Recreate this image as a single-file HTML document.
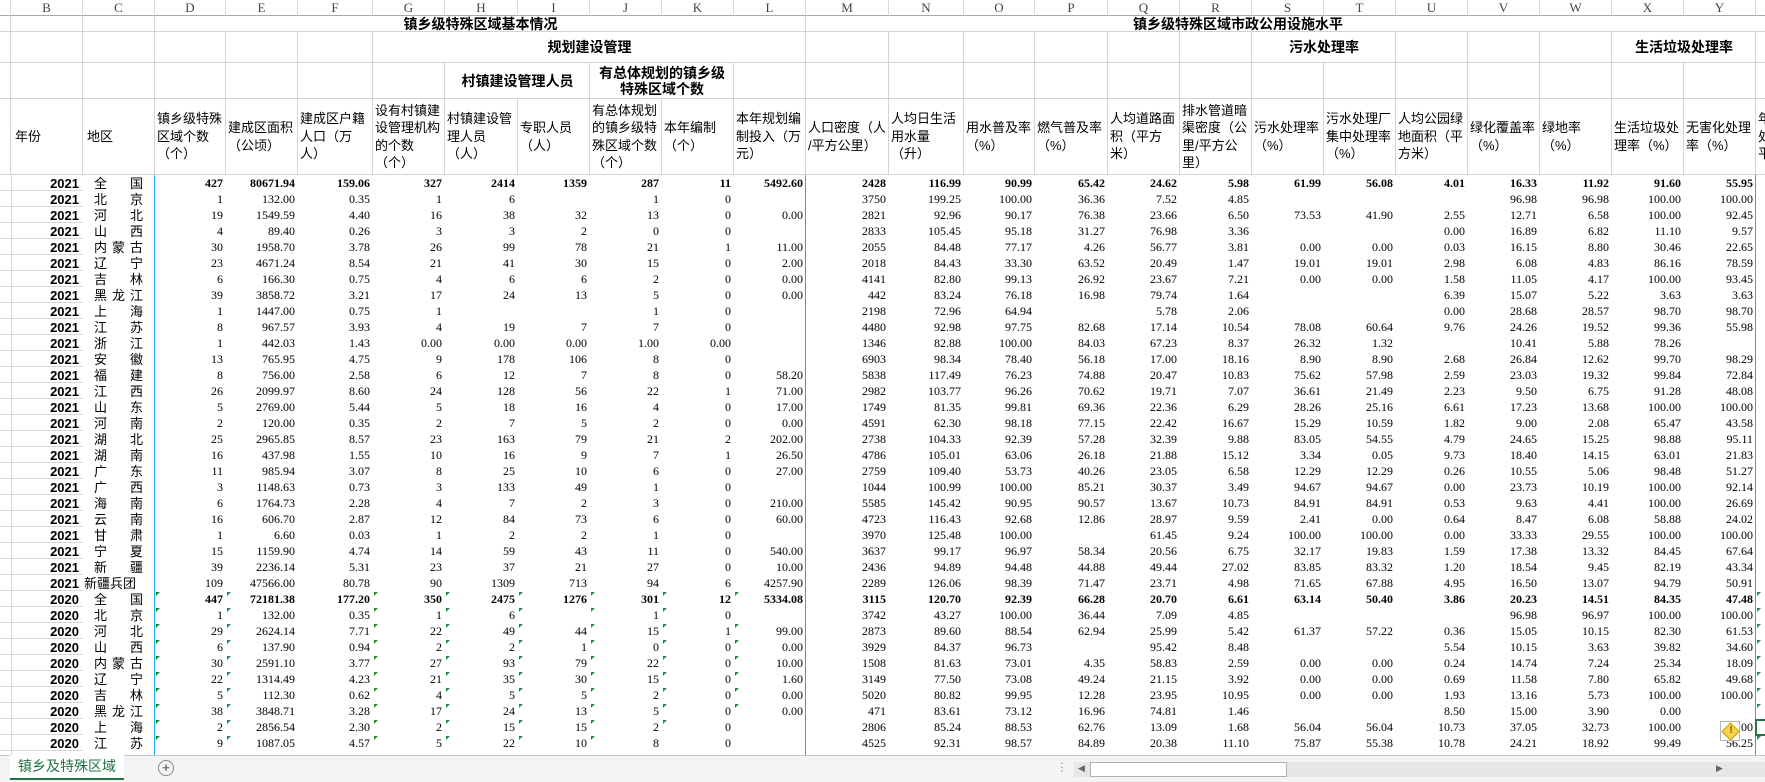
<!DOCTYPE html>
<html><head><meta charset="utf-8">
<style>
*{margin:0;padding:0}
body{width:1765px;height:782px;position:relative;overflow:hidden;background:#fff;font-family:"Liberation Sans","Noto Sans CJK SC",sans-serif}
.L{position:absolute;top:0;height:16px;box-sizing:border-box;border-right:1px solid #d8d8d8;border-bottom:1px solid #a8a8a8;font:13px/15px "Liberation Serif",serif;color:#444;text-align:center;background:#fff}
.h{position:absolute;box-sizing:border-box;border-right:1px solid #d4d4d4;border-bottom:1px solid #d4d4d4;font:13px/17.5px "Liberation Sans","Noto Sans CJK SC",sans-serif;display:flex;align-items:center;padding:0 1px 0 2px;color:#000;white-space:nowrap;overflow:hidden}
.hb{font-weight:bold;font-size:14px;justify-content:center;text-align:center;line-height:18px}
.d{position:absolute;left:11px;top:0;width:1754px;height:757px;font:12px "Liberation Serif",serif;color:#000}
.r{position:absolute;left:0;display:grid;grid-template-columns:72px 72px 71px 72px 75px 72px 73px 72px 72px 72px 72px 83px 75px 71px 73px 72px 72px 72px 72px 72px 72px 72px 72px 72px;grid-template-rows:16px;height:16px}
.d i{font-style:normal;text-align:right;padding-right:3px;line-height:17px;height:16px;white-space:nowrap;position:relative}
.b i{font-weight:bold}
.d i.y{font:bold 13px/17px "Liberation Sans",sans-serif;padding-right:4px}
.d i.c{text-align:justify;text-align-last:justify;padding:0 12px 0 11px;font:13px/17px "Liberation Sans","Noto Sans CJK SC",sans-serif;font-weight:normal}
.d i.t::before{content:"";position:absolute;left:1px;top:1px;border-style:solid;border-width:4px 4px 0 0;border-color:#1e8f3a transparent transparent transparent}
.strip{position:absolute;left:0;top:175px;width:83px;height:582px;background:repeating-linear-gradient(to bottom,transparent 0,transparent 15px,#dadada 15px,#dadada 16px)}
.sv{position:absolute;left:11px;top:175px;width:1px;height:582px;background:#dadada}
.bl{position:absolute;top:175px;height:582px;width:1px;background:#27a9e1}
.zt{position:absolute;left:1757px;width:0;height:0;border-style:solid;border-width:4px 4px 0 0;border-color:#1e8f3a transparent transparent transparent}
</style></head><body>

<div class="L" style="left:0;width:11px"></div>
<div class="L" style="left:11px;width:72px">B</div>
<div class="L" style="left:83px;width:72px">C</div>
<div class="L" style="left:155px;width:71px">D</div>
<div class="L" style="left:226px;width:72px">E</div>
<div class="L" style="left:298px;width:75px">F</div>
<div class="L" style="left:373px;width:72px">G</div>
<div class="L" style="left:445px;width:73px">H</div>
<div class="L" style="left:518px;width:72px">I</div>
<div class="L" style="left:590px;width:72px">J</div>
<div class="L" style="left:662px;width:72px">K</div>
<div class="L" style="left:734px;width:72px">L</div>
<div class="L" style="left:806px;width:83px">M</div>
<div class="L" style="left:889px;width:75px">N</div>
<div class="L" style="left:964px;width:71px">O</div>
<div class="L" style="left:1035px;width:73px">P</div>
<div class="L" style="left:1108px;width:72px">Q</div>
<div class="L" style="left:1180px;width:72px">R</div>
<div class="L" style="left:1252px;width:72px">S</div>
<div class="L" style="left:1324px;width:72px">T</div>
<div class="L" style="left:1396px;width:72px">U</div>
<div class="L" style="left:1468px;width:72px">V</div>
<div class="L" style="left:1540px;width:72px">W</div>
<div class="L" style="left:1612px;width:72px">X</div>
<div class="L" style="left:1684px;width:72px">Y</div>
<div class="L" style="left:1756px;width:20px"></div>

<div class="h" style="left:0;top:16px;width:11px;height:16px"></div>
<div class="h" style="left:11px;top:16px;width:72px;height:16px"></div>
<div class="h" style="left:83px;top:16px;width:72px;height:16px"></div>
<div class="h hb" style="left:155px;top:16px;width:651px;height:16px">镇乡级特殊区域基本情况</div>
<div class="h hb" style="left:806px;top:16px;width:964px;height:16px;justify-content:flex-start;padding-left:327px">镇乡级特殊区域市政公用设施水平</div>

<div class="h" style="left:0;top:32px;width:11px;height:31px"></div>
<div class="h" style="left:11px;top:32px;width:72px;height:31px"></div>
<div class="h" style="left:83px;top:32px;width:72px;height:31px"></div>
<div class="h" style="left:155px;top:32px;width:71px;height:31px"></div>
<div class="h" style="left:226px;top:32px;width:72px;height:31px"></div>
<div class="h" style="left:298px;top:32px;width:75px;height:31px"></div>
<div class="h hb" style="left:373px;top:32px;width:433px;height:31px">规划建设管理</div>
<div class="h" style="left:806px;top:32px;width:83px;height:31px"></div>
<div class="h" style="left:889px;top:32px;width:75px;height:31px"></div>
<div class="h" style="left:964px;top:32px;width:71px;height:31px"></div>
<div class="h" style="left:1035px;top:32px;width:73px;height:31px"></div>
<div class="h" style="left:1108px;top:32px;width:72px;height:31px"></div>
<div class="h" style="left:1180px;top:32px;width:72px;height:31px"></div>
<div class="h hb" style="left:1252px;top:32px;width:144px;height:31px">污水处理率</div>
<div class="h" style="left:1396px;top:32px;width:72px;height:31px"></div>
<div class="h" style="left:1468px;top:32px;width:72px;height:31px"></div>
<div class="h" style="left:1540px;top:32px;width:72px;height:31px"></div>
<div class="h hb" style="left:1612px;top:32px;width:144px;height:31px">生活垃圾处理率</div>
<div class="h" style="left:1756px;top:32px;width:20px;height:31px"></div>

<div class="h" style="left:0;top:63px;width:11px;height:36px"></div>
<div class="h" style="left:11px;top:63px;width:72px;height:36px"></div>
<div class="h" style="left:83px;top:63px;width:72px;height:36px"></div>
<div class="h" style="left:155px;top:63px;width:71px;height:36px"></div>
<div class="h" style="left:226px;top:63px;width:72px;height:36px"></div>
<div class="h" style="left:298px;top:63px;width:75px;height:36px"></div>
<div class="h" style="left:373px;top:63px;width:72px;height:36px"></div>
<div class="h hb" style="left:445px;top:63px;width:145px;height:36px">村镇建设管理人员</div>
<div class="h hb" style="left:590px;top:63px;width:144px;height:36px;line-height:16px">有总体规划的镇乡级<br>特殊区域个数</div>
<div class="h" style="left:734px;top:63px;width:72px;height:36px"></div>
<div class="h" style="left:806px;top:63px;width:83px;height:36px"></div>
<div class="h" style="left:889px;top:63px;width:75px;height:36px"></div>
<div class="h" style="left:964px;top:63px;width:71px;height:36px"></div>
<div class="h" style="left:1035px;top:63px;width:73px;height:36px"></div>
<div class="h" style="left:1108px;top:63px;width:72px;height:36px"></div>
<div class="h" style="left:1180px;top:63px;width:72px;height:36px"></div>
<div class="h" style="left:1252px;top:63px;width:72px;height:36px"></div>
<div class="h" style="left:1324px;top:63px;width:72px;height:36px"></div>
<div class="h" style="left:1396px;top:63px;width:72px;height:36px"></div>
<div class="h" style="left:1468px;top:63px;width:72px;height:36px"></div>
<div class="h" style="left:1540px;top:63px;width:72px;height:36px"></div>
<div class="h" style="left:1612px;top:63px;width:72px;height:36px"></div>
<div class="h" style="left:1684px;top:63px;width:72px;height:36px"></div>
<div class="h" style="left:1756px;top:63px;width:20px;height:36px"></div>

<div class="h" style="left:0;top:99px;width:11px;height:76px"></div>
<div class="h" style="left:11px;top:99px;width:72px;height:76px;padding-left:4px">年份</div>
<div class="h" style="left:83px;top:99px;width:72px;height:76px;padding-left:4px">地区</div>
<div class="h" style="left:155px;top:99px;width:71px;height:76px">镇乡级特殊<br>区域个数<br>（个）</div>
<div class="h" style="left:226px;top:99px;width:72px;height:76px">建成区面积<br>（公顷）</div>
<div class="h" style="left:298px;top:99px;width:75px;height:76px">建成区户籍<br>人口（万<br>人）</div>
<div class="h" style="left:373px;top:99px;width:72px;height:76px">设有村镇建<br>设管理机构<br>的个数<br>（个）</div>
<div class="h" style="left:445px;top:99px;width:73px;height:76px">村镇建设管<br>理人员<br>（人）</div>
<div class="h" style="left:518px;top:99px;width:72px;height:76px">专职人员<br>（人）</div>
<div class="h" style="left:590px;top:99px;width:72px;height:76px">有总体规划<br>的镇乡级特<br>殊区域个数<br>（个）</div>
<div class="h" style="left:662px;top:99px;width:72px;height:76px">本年编制<br>（个）</div>
<div class="h" style="left:734px;top:99px;width:72px;height:76px">本年规划编<br>制投入（万<br>元）</div>
<div class="h" style="left:806px;top:99px;width:83px;height:76px">人口密度（人<br>/平方公里）</div>
<div class="h" style="left:889px;top:99px;width:75px;height:76px">人均日生活<br>用水量<br>（升）</div>
<div class="h" style="left:964px;top:99px;width:71px;height:76px">用水普及率<br>（%）</div>
<div class="h" style="left:1035px;top:99px;width:73px;height:76px">燃气普及率<br>（%）</div>
<div class="h" style="left:1108px;top:99px;width:72px;height:76px">人均道路面<br>积（平方<br>米）</div>
<div class="h" style="left:1180px;top:99px;width:72px;height:76px">排水管道暗<br>渠密度（公<br>里/平方公<br>里）</div>
<div class="h" style="left:1252px;top:99px;width:72px;height:76px">污水处理率<br>（%）</div>
<div class="h" style="left:1324px;top:99px;width:72px;height:76px">污水处理厂<br>集中处理率<br>（%）</div>
<div class="h" style="left:1396px;top:99px;width:72px;height:76px">人均公园绿<br>地面积（平<br>方米）</div>
<div class="h" style="left:1468px;top:99px;width:72px;height:76px">绿化覆盖率<br>（%）</div>
<div class="h" style="left:1540px;top:99px;width:72px;height:76px">绿地率<br>（%）</div>
<div class="h" style="left:1612px;top:99px;width:72px;height:76px">生活垃圾处<br>理率（%）</div>
<div class="h" style="left:1684px;top:99px;width:72px;height:76px">无害化处理<br>率（%）</div>
<div class="h" style="left:1756px;top:99px;width:20px;height:76px">年<br>处<br>平</div>

<div class="strip"></div>
<div class="sv"></div>

<div class="d">
<div class="r b" style="top:175px"><i class="y">2021</i><i class="c">全 国</i><i>427</i><i>80671.94</i><i>159.06</i><i>327</i><i>2414</i><i>1359</i><i>287</i><i>11</i><i>5492.60</i><i>2428</i><i>116.99</i><i>90.99</i><i>65.42</i><i>24.62</i><i>5.98</i><i>61.99</i><i>56.08</i><i>4.01</i><i>16.33</i><i>11.92</i><i>91.60</i><i>55.95</i></div>
<div class="r" style="top:191px"><i class="y">2021</i><i class="c">北 京</i><i>1</i><i>132.00</i><i>0.35</i><i>1</i><i>6</i><i></i><i>1</i><i>0</i><i></i><i>3750</i><i>199.25</i><i>100.00</i><i>36.36</i><i>7.52</i><i>4.85</i><i></i><i></i><i></i><i>96.98</i><i>96.98</i><i>100.00</i><i>100.00</i></div>
<div class="r" style="top:207px"><i class="y">2021</i><i class="c">河 北</i><i>19</i><i>1549.59</i><i>4.40</i><i>16</i><i>38</i><i>32</i><i>13</i><i>0</i><i>0.00</i><i>2821</i><i>92.96</i><i>90.17</i><i>76.38</i><i>23.66</i><i>6.50</i><i>73.53</i><i>41.90</i><i>2.55</i><i>12.71</i><i>6.58</i><i>100.00</i><i>92.45</i></div>
<div class="r" style="top:223px"><i class="y">2021</i><i class="c">山 西</i><i>4</i><i>89.40</i><i>0.26</i><i>3</i><i>3</i><i>2</i><i>0</i><i>0</i><i></i><i>2833</i><i>105.45</i><i>95.18</i><i>31.27</i><i>76.98</i><i>3.36</i><i></i><i></i><i>0.00</i><i>16.89</i><i>6.82</i><i>11.10</i><i>9.57</i></div>
<div class="r" style="top:239px"><i class="y">2021</i><i class="c">内 蒙 古</i><i>30</i><i>1958.70</i><i>3.78</i><i>26</i><i>99</i><i>78</i><i>21</i><i>1</i><i>11.00</i><i>2055</i><i>84.48</i><i>77.17</i><i>4.26</i><i>56.77</i><i>3.81</i><i>0.00</i><i>0.00</i><i>0.03</i><i>16.15</i><i>8.80</i><i>30.46</i><i>22.65</i></div>
<div class="r" style="top:255px"><i class="y">2021</i><i class="c">辽 宁</i><i>23</i><i>4671.24</i><i>8.54</i><i>21</i><i>41</i><i>30</i><i>15</i><i>0</i><i>2.00</i><i>2018</i><i>84.43</i><i>33.30</i><i>63.52</i><i>20.49</i><i>1.47</i><i>19.01</i><i>19.01</i><i>2.98</i><i>6.08</i><i>4.83</i><i>86.16</i><i>78.59</i></div>
<div class="r" style="top:271px"><i class="y">2021</i><i class="c">吉 林</i><i>6</i><i>166.30</i><i>0.75</i><i>4</i><i>6</i><i>6</i><i>2</i><i>0</i><i>0.00</i><i>4141</i><i>82.80</i><i>99.13</i><i>26.92</i><i>23.67</i><i>7.21</i><i>0.00</i><i>0.00</i><i>1.58</i><i>11.05</i><i>4.17</i><i>100.00</i><i>93.45</i></div>
<div class="r" style="top:287px"><i class="y">2021</i><i class="c">黑 龙 江</i><i>39</i><i>3858.72</i><i>3.21</i><i>17</i><i>24</i><i>13</i><i>5</i><i>0</i><i>0.00</i><i>442</i><i>83.24</i><i>76.18</i><i>16.98</i><i>79.74</i><i>1.64</i><i></i><i></i><i>6.39</i><i>15.07</i><i>5.22</i><i>3.63</i><i>3.63</i></div>
<div class="r" style="top:303px"><i class="y">2021</i><i class="c">上 海</i><i>1</i><i>1447.00</i><i>0.75</i><i>1</i><i></i><i></i><i>1</i><i>0</i><i></i><i>2198</i><i>72.96</i><i>64.94</i><i></i><i>5.78</i><i>2.06</i><i></i><i></i><i>0.00</i><i>28.68</i><i>28.57</i><i>98.70</i><i>98.70</i></div>
<div class="r" style="top:319px"><i class="y">2021</i><i class="c">江 苏</i><i>8</i><i>967.57</i><i>3.93</i><i>4</i><i>19</i><i>7</i><i>7</i><i>0</i><i></i><i>4480</i><i>92.98</i><i>97.75</i><i>82.68</i><i>17.14</i><i>10.54</i><i>78.08</i><i>60.64</i><i>9.76</i><i>24.26</i><i>19.52</i><i>99.36</i><i>55.98</i></div>
<div class="r" style="top:335px"><i class="y">2021</i><i class="c">浙 江</i><i>1</i><i>442.03</i><i>1.43</i><i>0.00</i><i>0.00</i><i>0.00</i><i>1.00</i><i>0.00</i><i></i><i>1346</i><i>82.88</i><i>100.00</i><i>84.03</i><i>67.23</i><i>8.37</i><i>26.32</i><i>1.32</i><i></i><i>10.41</i><i>5.88</i><i>78.26</i><i></i></div>
<div class="r" style="top:351px"><i class="y">2021</i><i class="c">安 徽</i><i>13</i><i>765.95</i><i>4.75</i><i>9</i><i>178</i><i>106</i><i>8</i><i>0</i><i></i><i>6903</i><i>98.34</i><i>78.40</i><i>56.18</i><i>17.00</i><i>18.16</i><i>8.90</i><i>8.90</i><i>2.68</i><i>26.84</i><i>12.62</i><i>99.70</i><i>98.29</i></div>
<div class="r" style="top:367px"><i class="y">2021</i><i class="c">福 建</i><i>8</i><i>756.00</i><i>2.58</i><i>6</i><i>12</i><i>7</i><i>8</i><i>0</i><i>58.20</i><i>5838</i><i>117.49</i><i>76.23</i><i>74.88</i><i>20.47</i><i>10.83</i><i>75.62</i><i>57.98</i><i>2.59</i><i>23.03</i><i>19.32</i><i>99.84</i><i>72.84</i></div>
<div class="r" style="top:383px"><i class="y">2021</i><i class="c">江 西</i><i>26</i><i>2099.97</i><i>8.60</i><i>24</i><i>128</i><i>56</i><i>22</i><i>1</i><i>71.00</i><i>2982</i><i>103.77</i><i>96.26</i><i>70.62</i><i>19.71</i><i>7.07</i><i>36.61</i><i>21.49</i><i>2.23</i><i>9.50</i><i>6.75</i><i>91.28</i><i>48.08</i></div>
<div class="r" style="top:399px"><i class="y">2021</i><i class="c">山 东</i><i>5</i><i>2769.00</i><i>5.44</i><i>5</i><i>18</i><i>16</i><i>4</i><i>0</i><i>17.00</i><i>1749</i><i>81.35</i><i>99.81</i><i>69.36</i><i>22.36</i><i>6.29</i><i>28.26</i><i>25.16</i><i>6.61</i><i>17.23</i><i>13.68</i><i>100.00</i><i>100.00</i></div>
<div class="r" style="top:415px"><i class="y">2021</i><i class="c">河 南</i><i>2</i><i>120.00</i><i>0.35</i><i>2</i><i>7</i><i>5</i><i>2</i><i>0</i><i>0.00</i><i>4591</i><i>62.30</i><i>98.18</i><i>77.15</i><i>22.42</i><i>16.67</i><i>15.29</i><i>10.59</i><i>1.82</i><i>9.00</i><i>2.08</i><i>65.47</i><i>43.58</i></div>
<div class="r" style="top:431px"><i class="y">2021</i><i class="c">湖 北</i><i>25</i><i>2965.85</i><i>8.57</i><i>23</i><i>163</i><i>79</i><i>21</i><i>2</i><i>202.00</i><i>2738</i><i>104.33</i><i>92.39</i><i>57.28</i><i>32.39</i><i>9.88</i><i>83.05</i><i>54.55</i><i>4.79</i><i>24.65</i><i>15.25</i><i>98.88</i><i>95.11</i></div>
<div class="r" style="top:447px"><i class="y">2021</i><i class="c">湖 南</i><i>16</i><i>437.98</i><i>1.55</i><i>10</i><i>16</i><i>9</i><i>7</i><i>1</i><i>26.50</i><i>4786</i><i>105.01</i><i>63.06</i><i>26.18</i><i>21.88</i><i>15.12</i><i>3.34</i><i>0.05</i><i>9.73</i><i>18.40</i><i>14.15</i><i>63.01</i><i>21.83</i></div>
<div class="r" style="top:463px"><i class="y">2021</i><i class="c">广 东</i><i>11</i><i>985.94</i><i>3.07</i><i>8</i><i>25</i><i>10</i><i>6</i><i>0</i><i>27.00</i><i>2759</i><i>109.40</i><i>53.73</i><i>40.26</i><i>23.05</i><i>6.58</i><i>12.29</i><i>12.29</i><i>0.26</i><i>10.55</i><i>5.06</i><i>98.48</i><i>51.27</i></div>
<div class="r" style="top:479px"><i class="y">2021</i><i class="c">广 西</i><i>3</i><i>1148.63</i><i>0.73</i><i>3</i><i>133</i><i>49</i><i>1</i><i>0</i><i></i><i>1044</i><i>100.99</i><i>100.00</i><i>85.21</i><i>30.37</i><i>3.49</i><i>94.67</i><i>94.67</i><i>0.00</i><i>23.73</i><i>10.19</i><i>100.00</i><i>92.14</i></div>
<div class="r" style="top:495px"><i class="y">2021</i><i class="c">海 南</i><i>6</i><i>1764.73</i><i>2.28</i><i>4</i><i>7</i><i>2</i><i>3</i><i>0</i><i>210.00</i><i>5585</i><i>145.42</i><i>90.95</i><i>90.57</i><i>13.67</i><i>10.73</i><i>84.91</i><i>84.91</i><i>0.53</i><i>9.63</i><i>4.41</i><i>100.00</i><i>26.69</i></div>
<div class="r" style="top:511px"><i class="y">2021</i><i class="c">云 南</i><i>16</i><i>606.70</i><i>2.87</i><i>12</i><i>84</i><i>73</i><i>6</i><i>0</i><i>60.00</i><i>4723</i><i>116.43</i><i>92.68</i><i>12.86</i><i>28.97</i><i>9.59</i><i>2.41</i><i>0.00</i><i>0.64</i><i>8.47</i><i>6.08</i><i>58.88</i><i>24.02</i></div>
<div class="r" style="top:527px"><i class="y">2021</i><i class="c">甘 肃</i><i>1</i><i>6.60</i><i>0.03</i><i>1</i><i>2</i><i>2</i><i>1</i><i>0</i><i></i><i>3970</i><i>125.48</i><i>100.00</i><i></i><i>61.45</i><i>9.24</i><i>100.00</i><i>100.00</i><i>0.00</i><i>33.33</i><i>29.55</i><i>100.00</i><i>100.00</i></div>
<div class="r" style="top:543px"><i class="y">2021</i><i class="c">宁 夏</i><i>15</i><i>1159.90</i><i>4.74</i><i>14</i><i>59</i><i>43</i><i>11</i><i>0</i><i>540.00</i><i>3637</i><i>99.17</i><i>96.97</i><i>58.34</i><i>20.56</i><i>6.75</i><i>32.17</i><i>19.83</i><i>1.59</i><i>17.38</i><i>13.32</i><i>84.45</i><i>67.64</i></div>
<div class="r" style="top:559px"><i class="y">2021</i><i class="c">新 疆</i><i>39</i><i>2236.14</i><i>5.31</i><i>23</i><i>37</i><i>21</i><i>27</i><i>0</i><i>10.00</i><i>2436</i><i>94.89</i><i>94.48</i><i>44.88</i><i>49.44</i><i>27.02</i><i>83.85</i><i>83.32</i><i>1.20</i><i>18.54</i><i>9.45</i><i>82.19</i><i>43.34</i></div>
<div class="r" style="top:575px"><i class="y">2021</i><i class="c" style="padding:0 2px 0 1px;text-align-last:left">新疆兵团</i><i>109</i><i>47566.00</i><i>80.78</i><i>90</i><i>1309</i><i>713</i><i>94</i><i>6</i><i>4257.90</i><i>2289</i><i>126.06</i><i>98.39</i><i>71.47</i><i>23.71</i><i>4.98</i><i>71.65</i><i>67.88</i><i>4.95</i><i>16.50</i><i>13.07</i><i>94.79</i><i>50.91</i></div>
<div class="r b" style="top:591px"><i class="y">2020</i><i class="c">全 国</i><i class="t">447</i><i class="t">72181.38</i><i>177.20</i><i class="t">350</i><i class="t">2475</i><i class="t">1276</i><i class="t">301</i><i class="t">12</i><i class="t">5334.08</i><i>3115</i><i>120.70</i><i>92.39</i><i>66.28</i><i>20.70</i><i>6.61</i><i>63.14</i><i>50.40</i><i>3.86</i><i>20.23</i><i>14.51</i><i>84.35</i><i>47.48</i></div>
<div class="r" style="top:607px"><i class="y">2020</i><i class="c">北 京</i><i class="t">1</i><i class="t">132.00</i><i>0.35</i><i class="t">1</i><i class="t">6</i><i class="t"></i><i class="t">1</i><i class="t">0</i><i></i><i>3742</i><i>43.27</i><i>100.00</i><i>36.44</i><i>7.09</i><i>4.85</i><i></i><i></i><i></i><i>96.98</i><i>96.97</i><i>100.00</i><i>100.00</i></div>
<div class="r" style="top:623px"><i class="y">2020</i><i class="c">河 北</i><i class="t">29</i><i class="t">2624.14</i><i>7.71</i><i class="t">22</i><i class="t">49</i><i class="t">44</i><i class="t">15</i><i class="t">1</i><i class="t">99.00</i><i>2873</i><i>89.60</i><i>88.54</i><i>62.94</i><i>25.99</i><i>5.42</i><i>61.37</i><i>57.22</i><i>0.36</i><i>15.05</i><i>10.15</i><i>82.30</i><i>61.53</i></div>
<div class="r" style="top:639px"><i class="y">2020</i><i class="c">山 西</i><i class="t">6</i><i class="t">137.90</i><i>0.94</i><i class="t">2</i><i class="t">2</i><i class="t">1</i><i class="t">0</i><i class="t">0</i><i class="t">0.00</i><i>3929</i><i>84.37</i><i>96.73</i><i></i><i>95.42</i><i>8.48</i><i></i><i></i><i>5.54</i><i>10.15</i><i>3.63</i><i>39.82</i><i>34.60</i></div>
<div class="r" style="top:655px"><i class="y">2020</i><i class="c">内 蒙 古</i><i class="t">30</i><i class="t">2591.10</i><i>3.77</i><i class="t">27</i><i class="t">93</i><i class="t">79</i><i class="t">22</i><i class="t">0</i><i class="t">10.00</i><i>1508</i><i>81.63</i><i>73.01</i><i>4.35</i><i>58.83</i><i>2.59</i><i>0.00</i><i>0.00</i><i>0.24</i><i>14.74</i><i>7.24</i><i>25.34</i><i>18.09</i></div>
<div class="r" style="top:671px"><i class="y">2020</i><i class="c">辽 宁</i><i class="t">22</i><i class="t">1314.49</i><i>4.23</i><i class="t">21</i><i class="t">35</i><i class="t">30</i><i class="t">15</i><i class="t">0</i><i class="t">1.60</i><i>3149</i><i>77.50</i><i>73.08</i><i>49.24</i><i>21.15</i><i>3.92</i><i>0.00</i><i>0.00</i><i>0.69</i><i>11.58</i><i>7.80</i><i>65.82</i><i>49.68</i></div>
<div class="r" style="top:687px"><i class="y">2020</i><i class="c">吉 林</i><i class="t">5</i><i class="t">112.30</i><i>0.62</i><i class="t">4</i><i class="t">5</i><i class="t">5</i><i class="t">2</i><i class="t">0</i><i class="t">0.00</i><i>5020</i><i>80.82</i><i>99.95</i><i>12.28</i><i>23.95</i><i>10.95</i><i>0.00</i><i>0.00</i><i>1.93</i><i>13.16</i><i>5.73</i><i>100.00</i><i>100.00</i></div>
<div class="r" style="top:703px"><i class="y">2020</i><i class="c">黑 龙 江</i><i class="t">38</i><i class="t">3848.71</i><i>3.28</i><i class="t">17</i><i class="t">24</i><i class="t">13</i><i class="t">5</i><i class="t">0</i><i class="t">0.00</i><i>471</i><i>83.61</i><i>73.12</i><i>16.96</i><i>74.81</i><i>1.46</i><i></i><i></i><i>8.50</i><i>15.00</i><i>3.90</i><i>0.00</i><i></i></div>
<div class="r" style="top:719px"><i class="y">2020</i><i class="c">上 海</i><i class="t">2</i><i class="t">2856.54</i><i>2.30</i><i class="t">2</i><i class="t">15</i><i class="t">15</i><i class="t">2</i><i class="t">0</i><i></i><i>2806</i><i>85.24</i><i>88.53</i><i>62.76</i><i>13.09</i><i>1.68</i><i>56.04</i><i>56.04</i><i>10.73</i><i>37.05</i><i>32.73</i><i>100.00</i><i>100.00</i></div>
<div class="r" style="top:735px"><i class="y">2020</i><i class="c">江 苏</i><i class="t">9</i><i class="t">1087.05</i><i>4.57</i><i class="t">5</i><i class="t">22</i><i class="t">10</i><i class="t">8</i><i>0</i><i></i><i>4525</i><i>92.31</i><i>98.57</i><i>84.89</i><i>20.38</i><i>11.10</i><i>75.87</i><i>55.38</i><i>10.78</i><i>24.21</i><i>18.92</i><i>99.49</i><i>56.25</i></div>
</div>

<div class="bl" style="left:154px"></div>
<div class="bl" style="left:805px"></div>
<div class="bl" style="left:1755px"></div>

<div class="zt" style="top:592px"></div><div class="zt" style="top:608px"></div><div class="zt" style="top:624px"></div><div class="zt" style="top:640px"></div><div class="zt" style="top:656px"></div><div class="zt" style="top:672px"></div><div class="zt" style="top:688px"></div><div class="zt" style="top:704px"></div><div class="zt" style="top:736px"></div>

<div style="position:absolute;left:1755px;top:719px;width:12px;height:17px;border:2px solid #217346;box-sizing:border-box;border-right:none"></div>
<div style="position:absolute;left:1720px;top:721px;width:20px;height:20px;border:1px solid #b5b5b5;background:#fff;box-sizing:border-box"></div>
<div style="position:absolute;left:1724px;top:725px;width:11px;height:11px;background:#f5d34a;border:1px solid #c9a100;transform:rotate(45deg)"></div>
<div style="position:absolute;left:1727px;top:724px;width:8px;font:bold 10px/14px 'Liberation Sans',sans-serif;color:#7a5a00;text-align:center">!</div>

<div style="position:absolute;left:0;top:755px;width:1765px;height:27px;background:#f4f4f4;border-top:1px solid #c6c6c6;box-sizing:border-box"></div>
<div style="position:absolute;left:10px;top:755px;width:114px;height:25px;background:#fff;border-bottom:2px solid #217346;box-sizing:border-box;font:14px/23px 'Liberation Sans','Noto Sans CJK SC',sans-serif;color:#217346;text-align:center">镇乡及特殊区域</div>
<div style="position:absolute;left:158px;top:760px;width:14px;height:14px;border:1px solid #8a8a8a;border-radius:50%;font:bold 13px/14px 'Liberation Sans',sans-serif;color:#777;text-align:center">+</div>
<div style="position:absolute;left:1056px;top:759px;font:12px/16px 'Liberation Sans',sans-serif;color:#999">⋮</div>
<div style="position:absolute;left:1074px;top:762px;width:691px;height:15px;background:#e6e6e6"></div>
<div style="position:absolute;left:1078px;top:764px;font:9px/11px 'DejaVu Sans',sans-serif;color:#666">◀</div>
<div style="position:absolute;left:1090px;top:762px;width:197px;height:15px;background:#fff;border:1px solid #b0b0b0;box-sizing:border-box"></div>
<div style="position:absolute;left:1716px;top:764px;font:9px/11px 'DejaVu Sans',sans-serif;color:#666">▶</div>
</body></html>
